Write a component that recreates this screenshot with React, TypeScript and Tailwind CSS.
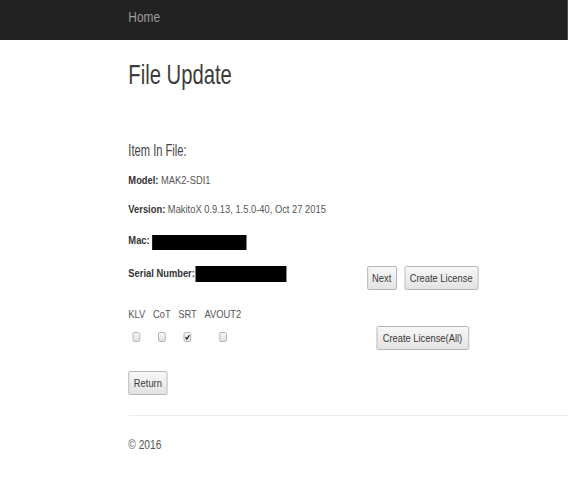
import React from "react";

function Btn({ label, className }: { label: string; className: string }) {
  return (
    <button
      className={
        "flex h-[24px] items-center justify-center whitespace-nowrap rounded-[2px] border border-[#b0b0b0] bg-linear-to-b from-[#f7f7f7] to-[#e3e3e3] text-[11px] leading-4 text-[#3a3a3a] " +
        className
      }
    >
      {label}
    </button>
  );
}

function Box({ checked }: { checked?: boolean }) {
  return (
    <span className="mt-[10px] flex h-[10px] w-[9px] items-center justify-center rounded-[2px] border border-[#b0b0b0] bg-linear-to-b from-[#f7f7f7] to-[#dedede]">
      {checked && (
        <svg viewBox="0 0 10 10" className="h-[8px] w-[8px]">
          <path d="M1.8 5.4 4.1 7.8 8.4 2.2" fill="none" stroke="#1f1f1f" strokeWidth="1.9" />
        </svg>
      )}
    </span>
  );
}

const features = [
  { name: "KLV", on: false },
  { name: "CoT", on: false },
  { name: "SRT", on: true },
  { name: "AVOUT2", on: false },
];

export default function App() {
  return (
    <div className="h-[496px] w-full overflow-hidden bg-white font-['Liberation_Sans',Arial,sans-serif]">
      {/* page is drawn narrow, so the whole thing is squeezed sideways */}
      <div className="w-[668px] origin-top-left scale-x-[0.85]">
        <nav className="h-[40px] bg-[#222] pl-[151px] pt-[5px]">
          <span className="text-[14px] leading-5 text-[#9d9d9d]">Home</span>
        </nav>

        <div className="ml-[151px] w-[517px] text-[#333]">
          <h1 className="mt-[19px] origin-left scale-x-[0.85] text-[28px] leading-8 text-[#3c3c3c]">
            File Update
          </h1>

          <p className="mt-[50px] origin-left scale-x-[0.82] text-[16px] leading-5 text-[#444]">Item In File:</p>

          <p className="mt-[11px] text-[11px] leading-4 text-[#555]">
            <b className="text-[#333]">Model:</b> MAK2-SDI1
          </p>
          <p className="mt-[13px] text-[11px] leading-4 text-[#555]">
            <b className="text-[#333]">Version:</b> MakitoX 0.9.13, 1.5.0-40, Oct 27 2015
          </p>
          <div className="mt-[15px] flex items-start text-[11px] leading-4">
            <b>Mac:</b>
            <span className="ml-[3px] mt-[3px] h-[15px] w-[111px] bg-black" />
          </div>

          <div className="mt-[15px] flex items-start">
            <div className="flex w-[280px] items-start text-[11px] leading-4">
              <b>Serial Number:</b>
              <span className="ml-[1px] mt-[1px] h-[16px] w-[107px] bg-black" />
            </div>
            <div className="mt-[1px] flex w-[132px] justify-center gap-[9px]">
              <Btn label="Next" className="w-[35px]" />
              <Btn label="Create License" className="w-[87px]" />
            </div>
          </div>

          <div className="mt-[16px] flex items-start">
            <div className="flex w-[280px] gap-[9px]">
              {features.map((f) => (
                <div key={f.name} className="flex flex-col items-center">
                  <span className="text-[11px] leading-4 text-[#555]">{f.name}</span>
                  <Box checked={f.on} />
                </div>
              ))}
            </div>
            <div className="mt-[20px] flex w-[132px] justify-center">
              <Btn label="Create License(All)" className="w-[109px]" />
            </div>
          </div>

          <Btn label="Return" className="mt-[21px] w-[46px]" />

          <div className="mt-[20px] border-t border-[#eee]" />

          <p className="mt-[21px] text-[12px] leading-4 text-[#555]">© 2016</p>
        </div>
      </div>
    </div>
  );
}
